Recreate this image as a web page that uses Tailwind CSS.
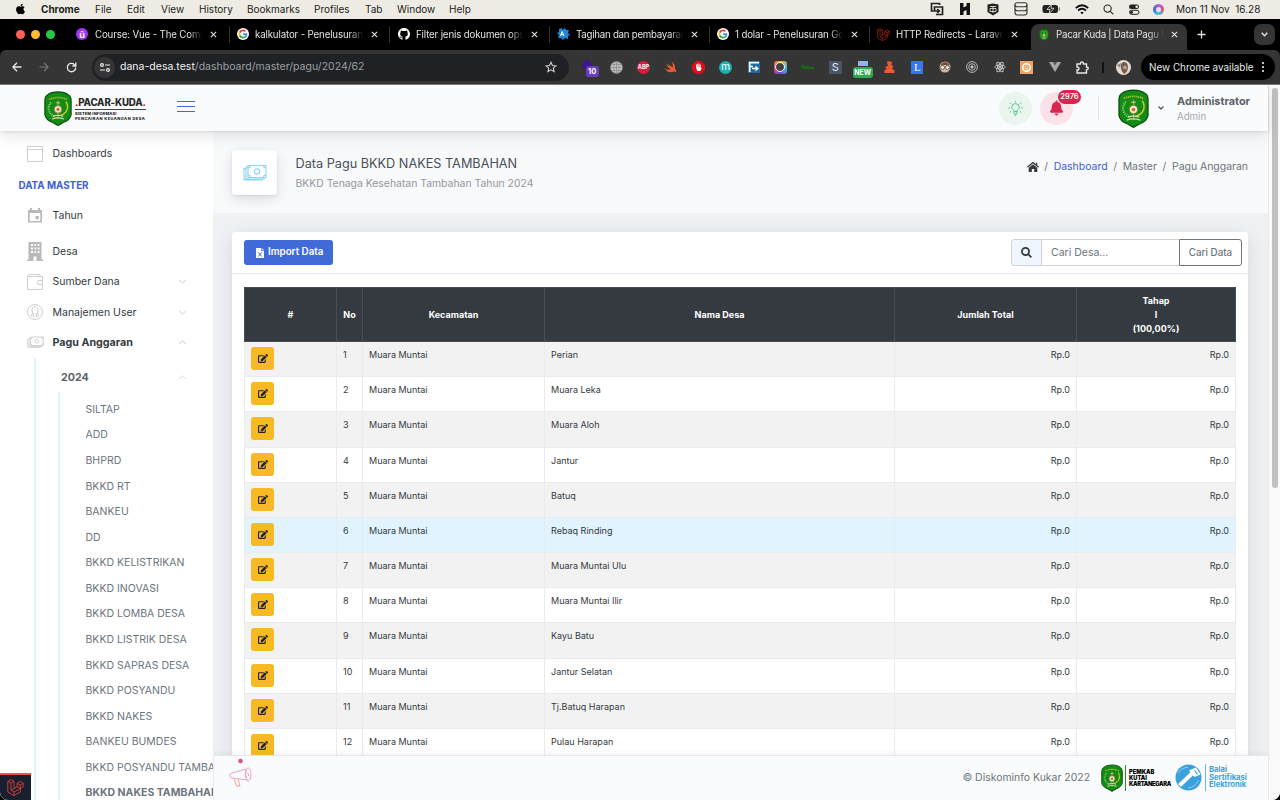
<!DOCTYPE html>
<html lang="id">
<head>
<meta charset="utf-8">
<title>Pacar Kuda | Data Pagu BKKD</title>
<script src="https://cdn.jsdelivr.net/npm/@tailwindcss/browser@4"></script>
</head>
<body class="w-[1280px] h-[800px] overflow-hidden bg-black font-['Inter',sans-serif] text-[#495057]">
<svg class="hidden">
  <symbol id="emblem" viewBox="0 0 32 40">
    <path d="M16 1C21 1 25 2 28 4.500Q31 6 31 11V27Q30 33 22 36L16 39.500L10 36Q2 33 1 27V11Q1 6 4 4.500Q8 1 16 1Z" fill="#128c14" stroke="#0a4d0a" stroke-width="1.300"/>
    <path d="M6 9.500Q16 5.500 26 9.500" fill="none" stroke="#a8b832" stroke-width="1.800" stroke-dasharray="1.500 .6"/>
    <path d="M8 13Q3 19 7 25Q9 28 13 29" fill="none" stroke="#8fce74" stroke-width="2.200" stroke-dasharray="1.200 1"/>
    <path d="M25 12Q29 18 25 24Q22 27.500 18 28" fill="none" stroke="#c8c82c" stroke-width="1.600"/>
    <path d="M16 11V32" stroke="#b89a5a" stroke-width="1.400" fill="none"/>
    <path d="M13.500 13.500H18.500" stroke="#d8d6a0" stroke-width="1"/>
    <circle cx="16" cy="21" r="4.300" fill="#f0ead8" stroke="#7a6a20" stroke-width=".8"/><circle cx="16" cy="21" r="1.900" fill="#c8702e"/>
    <path d="M10 29Q16 26.500 22 29M9 32Q16 29.500 23 32" stroke="#d8dcae" stroke-width="1.300" fill="none"/>
  </symbol>
  <symbol id="google" viewBox="0 0 48 48">
    <circle cx="24" cy="24" r="24" fill="#fff"/>
    <g transform="translate(6 6) scale(.75)"><path fill="#EA4335" d="M24 9.500c3.540 0 6.710 1.220 9.210 3.600l6.850-6.850C35.900 2.380 30.470 0 24 0 14.620 0 6.510 5.380 2.560 13.220l7.980 6.190C12.430 13.720 17.740 9.500 24 9.500z"/><path fill="#4285F4" d="M46.980 24.550c0-1.570-.15-3.090-.38-4.550H24v9.020h12.940c-.58 2.960-2.260 5.480-4.780 7.180l7.730 6c4.510-4.180 7.090-10.360 7.090-17.650z"/><path fill="#FBBC05" d="M10.530 28.590c-.48-1.450-.76-2.990-.76-4.590s.27-3.140.76-4.590l-7.980-6.190C.92 16.460 0 20.120 0 24c0 3.880.92 7.540 2.560 10.780l7.970-6.190z"/><path fill="#34A853" d="M24 48c6.480 0 11.930-2.130 15.890-5.810l-7.730-6c-2.150 1.450-4.920 2.300-8.160 2.300-6.260 0-11.570-4.220-13.470-9.910l-7.980 6.190C6.510 42.620 14.620 48 24 48z"/></g>
  </symbol>
  <symbol id="github" viewBox="0 0 16 16"><path fill="#fff" d="M8 0C3.580 0 0 3.580 0 8c0 3.540 2.290 6.530 5.470 7.590.4.070.55-.17.55-.38 0-.19-.01-.82-.01-1.490-2.010.37-2.530-.49-2.690-.94-.09-.23-.48-.94-.82-1.130-.28-.15-.68-.52-.01-.53.63-.01 1.080.58 1.230.82.72 1.210 1.870.87 2.330.66.07-.52.28-.87.51-1.070-1.780-.2-3.640-.89-3.640-3.950 0-.87.310-1.590.82-2.150-.08-.2-.36-1.020.08-2.120 0 0 .67-.21 2.200.82.64-.18 1.320-.27 2-.27s1.360.09 2 .27c1.530-1.040 2.200-.82 2.200-.82.44 1.100.16 1.920.08 2.120.51.56.82 1.270.82 2.150 0 3.070-1.870 3.750-3.650 3.950.29.25.54.73.54 1.480 0 1.070-.01 1.930-.01 2.200 0 .21.15.46.55.38A8.010 8.010 0 0016 8c0-4.420-3.580-8-8-8z"/></symbol>
  <symbol id="laravel" viewBox="0 0 50 52"><path fill="none" stroke="currentColor" stroke-width="2.600" stroke-linejoin="round" d="M1.500 7L11 1.500L20.500 7V29L30 23.500V13L39.500 7.500L48.500 13V24L39.500 29.500V40L20.500 50.500L1.500 40ZM1.500 7L11 12.500L20.500 7M11 12.500V34.500L20.500 40L39.500 29.500L30 23.500M30 13L39.500 18.500L48.500 13M39.500 18.500V29.500M11 34.500L20.500 29M20.500 40V50"/></symbol>
  <symbol id="x" viewBox="0 0 8 8"><path d="M1 1L7 7M7 1L1 7" stroke="#e8e8e8" stroke-width="1.200"/></symbol>
  <symbol id="money" viewBox="0 0 24 16"><path fill="none" stroke="currentColor" stroke-width="1.100" d="M5 1H23V13H5ZM5 2.500H3V14.500H21V13M3 4H1V15.500H19V14.500M7.500 1Q7.500 3.500 5 3.500M20.500 1Q20.500 3.500 23 3.500M7.500 13Q7.500 10.500 5 10.500M20.500 13Q20.500 10.500 23 10.500"/><circle cx="14" cy="7" r="2.600" fill="none" stroke="currentColor" stroke-width="1.100"/></symbol>
  <symbol id="edit" viewBox="0 0 576 512"><path fill="currentColor" d="M402.600 83.200l90.200 90.200c3.800 3.800 3.800 10 0 13.800L274.400 405.600l-92.800 10.300c-12.400 1.400-22.900-9.100-21.500-21.500l10.300-92.800L388.800 83.200c3.800-3.800 10-3.800 13.800 0zm162-22.900l-48.800-48.800c-15.200-15.200-39.900-15.200-55.200 0l-35.400 35.400c-3.800 3.800-3.800 10 0 13.800l90.200 90.200c3.800 3.800 10 3.800 13.800 0l35.400-35.400c15.200-15.300 15.200-40 0-55.200zM384 346.200V448H64V128h229.800c3.200 0 6.200-1.300 8.500-3.500l40-40c7.600-7.600 2.200-20.500-8.500-20.500H48C21.500 64 0 85.500 0 112v352c0 26.500 21.500 48 48 48h352c26.500 0 48-21.500 48-48V306.200c0-10.700-12.900-16-20.500-8.500l-40 40c-2.200 2.300-3.500 5.300-3.500 8.500z"/></symbol>
</svg>

<!-- macOS menu bar -->
<div class="flex h-[19px] items-center bg-[#edebe3] pb-px pl-[15px] pr-[14px] text-[10px] leading-none text-[#1c1c1c]">
  <svg class="h-[12px] w-[11px]" viewBox="0 0 384 512"><path d="M318.700 268.700c-.2-36.700 16.400-64.400 50-84.800-18.800-26.900-47.200-41.700-84.700-44.600-35.500-2.800-74.300 20.700-88.500 20.700-15 0-49.400-19.700-76.400-19.700C63.300 141.200 4 184.800 4 273.500q0 39.300 14.400 81.200c12.800 36.700 59 126.700 107.200 125.200 25.200-.6 43-17.900 75.800-17.900 31.800 0 48.300 17.900 76.400 17.900 48.600-.7 90.400-82.500 102.600-119.300-65.200-30.700-61.700-90-61.700-91.900zm-56.600-164.200c27.300-32.400 24.800-61.900 24-72.500-24.100 1.400-52 16.400-67.900 34.900-17.500 19.800-27.800 44.300-25.600 71.900 26.100 2 49.900-11.400 69.500-34.300z"/></svg>
  <div class="ml-[15px] w-[54px] font-bold">Chrome</div>
  <div class="w-[32px]">File</div><div class="w-[34px]">Edit</div><div class="w-[38px]">View</div><div class="w-[48px]">History</div><div class="w-[67px]">Bookmarks</div><div class="w-[51px]">Profiles</div><div class="w-[32px]">Tab</div><div class="w-[52px]">Window</div><div>Help</div>
  <div class="ml-auto flex items-center">
    <svg class="h-[14px] w-[14px]" viewBox="0 0 14 14" fill="none" stroke="#222" stroke-width="1.700"><path d="M3.500 9H1.500V1.500H9.500V3M6 12.500H12.500V5H4.500V9H9M7.300 7L9.300 9L7.300 11"/></svg>
    <svg class="ml-[16px] h-[12px] w-[10px]" viewBox="0 0 10 12"><path d="M0 0H3.500V4.500L6.500 3V0H10V12H6.500V7L3.500 8.500V12H0Z" fill="#111"/></svg>
    <svg class="ml-[17px] h-[13px] w-[12px]" viewBox="0 0 12 13"><path d="M.5 1.500L6 .5L11.500 1.500V9L6 12.500L.5 9Z" fill="#222"/><path d="M3 3.500H9M3 5.500H9V8.500H3ZM6 3.500V10" stroke="#edebe3" stroke-width=".8" fill="none"/></svg>
    <svg class="ml-[15px] h-[14px] w-[14px]" viewBox="0 0 14 14" fill="none" stroke="#333" stroke-width="1.100"><rect x="1" y=".8" width="12" height="4" rx="2"/><path d="M1 3V6.500Q1 8.800 3.500 8.800H10.500Q13 8.800 13 6.500V3M1 6.500V10.500Q1 13 3.500 13H10.500Q13 13 13 10.500V6.500"/></svg>
    <svg class="ml-[14px] h-[10px] w-[19px]" viewBox="0 0 19 10"><rect x=".5" y="1" width="15.500" height="8" rx="2.200" fill="#222"/><path d="M17.300 3.500V6.500" stroke="#777" stroke-width="1.200"/><path d="M9.500 0L5 5.500H8L7 10L12 4.300H9Z" fill="#222" stroke="#edebe3" stroke-width=".8"/></svg>
    <svg class="ml-[14px] h-[11px] w-[14px]" viewBox="0 0 14 11" fill="none" stroke="#111" stroke-width="1.700"><path d="M.8 4Q7-1.500 13.200 4M3 6.500Q7 3 11 6.500"/><path d="M5.300 8.500Q7 7.200 8.700 8.500L7 10.200Z" fill="#111" stroke="none"/></svg>
    <svg class="ml-[14px] h-[11px] w-[11px]" viewBox="0 0 11 11" fill="none" stroke="#222" stroke-width="1.100"><circle cx="4.600" cy="4.600" r="3.600"/><path d="M7.300 7.300L10.400 10.400"/></svg>
    <svg class="ml-[14px] h-[11px] w-[12px]" viewBox="0 0 12 11"><rect x="1" y=".5" width="10" height="4.400" rx="2.200" fill="#222"/><rect x="1.500" y="6.300" width="9.500" height="4" rx="2" fill="none" stroke="#222"/><circle cx="8.700" cy="2.700" r="1.300" fill="#edebe3"/><circle cx="3.500" cy="8.300" r="1.500" fill="#222"/></svg>
    <div class="ml-[13px] h-[11px] w-[11px] rounded-full bg-[conic-gradient(#b05ad8,#e04b8c,#3fc8d8,#3a6fe0,#b05ad8)] p-[3px]"><div class="h-full w-full rounded-full bg-white/80"></div></div>
    <div class="ml-[12px] w-[90px] whitespace-nowrap">Mon 11 Nov&nbsp; 16.28</div>
  </div>
</div>

<!-- Browser tabs -->
<div class="flex h-[31px] items-center bg-black pl-[16px] pr-[5px] text-[9.700px] leading-none tracking-[-0.140px] text-[#e3e3e3]">
  <div class="flex w-[54px] gap-[6px]"><i class="h-[9px] w-[9px] rounded-full bg-[#fe5f57]"></i><i class="h-[9px] w-[9px] rounded-full bg-[#febc2e]"></i><i class="h-[9px] w-[9px] rounded-full bg-[#28c840]"></i></div>
  <div class="flex w-[160px] items-center border-r border-[#333] pl-[6px]"><span class="flex h-[12px] w-[12px] items-center justify-center rounded-full bg-[#a435f0] text-[9px] font-bold text-white">û</span><span class="ml-[7px] w-[107px] overflow-hidden whitespace-nowrap py-1 [mask-image:linear-gradient(90deg,#000_88%,transparent)]">Course: Vue - The Comp</span><svg class="ml-[8px] h-[7px] w-[7px]"><use href="#x"/></svg></div>
  <div class="flex w-[160px] items-center border-r border-[#333] pl-[7px]"><svg class="h-[12px] w-[12px]"><use href="#google"/></svg><span class="ml-[6px] w-[108px] overflow-hidden whitespace-nowrap py-1 [mask-image:linear-gradient(90deg,#000_88%,transparent)]">kalkulator - Penelusuran</span><svg class="ml-[8px] h-[7px] w-[7px]"><use href="#x"/></svg></div>
  <div class="flex w-[160px] items-center border-r border-[#333] pl-[8px]"><svg class="h-[12px] w-[12px]"><use href="#github"/></svg><span class="ml-[6px] w-[107px] overflow-hidden whitespace-nowrap py-1 [mask-image:linear-gradient(90deg,#000_88%,transparent)]">Filter jenis dokumen ops</span><svg class="ml-[8px] h-[7px] w-[7px]"><use href="#x"/></svg></div>
  <div class="flex w-[160px] items-center border-r border-[#333] pl-[7px]"><svg class="h-[12px] w-[13px]" viewBox="0 0 13 12"><path d="M2 1L5 0V2L8 0L9 2L12 2L11 5L13 7L11 8L11 11L8 10L6 12L4 10L1 10L2 7L0 5L2 4Z" fill="#1c86d8"/><path d="M3.500 8L5.200 3.500L7 8M4 6.600H6.300" stroke="#fff" fill="none"/></svg><span class="ml-[6px] w-[107px] overflow-hidden whitespace-nowrap py-1 tracking-[-0.250px] [mask-image:linear-gradient(90deg,#000_88%,transparent)]">Tagihan dan pembayaran</span><svg class="ml-[8px] h-[7px] w-[7px]"><use href="#x"/></svg></div>
  <div class="flex w-[160px] items-center border-r border-[#333] pl-[7px]"><svg class="h-[12px] w-[12px]"><use href="#google"/></svg><span class="ml-[6px] w-[108px] overflow-hidden whitespace-nowrap py-1 [mask-image:linear-gradient(90deg,#000_88%,transparent)]">1 dolar - Penelusuran Go</span><svg class="ml-[8px] h-[7px] w-[7px]"><use href="#x"/></svg></div>
  <div class="flex w-[161px] items-center pl-[7px]"><svg class="h-[13px] w-[13px] text-[#b3261c]"><use href="#laravel"/></svg><span class="ml-[6px] w-[107px] overflow-hidden whitespace-nowrap py-1 [mask-image:linear-gradient(90deg,#000_88%,transparent)]">HTTP Redirects - Larave</span><svg class="ml-[8px] h-[7px] w-[7px]"><use href="#x"/></svg></div>
  <div class="mt-[5px] flex h-[26px] w-[156px] items-center rounded-t-[8px] bg-[#353535] pb-[5px] pl-[7px]"><svg class="h-[12px] w-[12px]"><use href="#emblem"/></svg><span class="ml-[6px] w-[108px] overflow-hidden whitespace-nowrap py-1 tracking-[-0.250px] [mask-image:linear-gradient(90deg,#000_85%,transparent)]">Pacar Kuda | Data Pagu B</span><svg class="ml-[7px] h-[7px] w-[7px]"><use href="#x"/></svg></div>
  <svg class="ml-[10px] h-[9px] w-[9px]" viewBox="0 0 9 9"><path d="M4.500 .5V8.500M.5 4.500H8.500" stroke="#e3e3e3" stroke-width="1.300"/></svg>
  <div class="ml-auto flex h-[21px] w-[21px] items-center justify-center rounded-[7px] bg-[#353535]"><svg class="h-[5px] w-[7px]" viewBox="0 0 7 5"><path d="M.7 .8L3.500 3.800L6.300 .8" fill="none" stroke="#e3e3e3" stroke-width="1.300"/></svg></div>
</div>

<!-- Browser toolbar -->
<div class="flex h-[35px] items-center rounded-t-[6px] border-b border-[#777] bg-[#353535] pl-[12px] pr-[5px] text-[10.500px] leading-none text-[#e8e8e8]">
  <svg class="h-[10px] w-[10px]" viewBox="0 0 10 10" fill="none" stroke="#e8e8e8" stroke-width="1.300"><path d="M9.500 5H1M5 .8L.9 5L5 9.200"/></svg>
  <svg class="ml-[17px] h-[10px] w-[10px]" viewBox="0 0 10 10" fill="none" stroke="#777" stroke-width="1.200"><path d="M.5 5H9M5 .8L9.100 5L5 9.200"/></svg>
  <svg class="ml-[17px] h-[11px] w-[11px]" viewBox="0 0 11 11" fill="none" stroke="#e8e8e8" stroke-width="1.300"><path d="M9.700 5.500A4.200 4.200 0 1 1 8.300 2.400L9.600 3.800M9.800 .6V4H6.400"/></svg>
  <div class="ml-[15px] flex h-[27px] w-[477px] items-center rounded-full bg-[#202124] pl-[2px]">
    <div class="flex h-[21px] w-[21px] items-center justify-center rounded-full bg-[#353535]"><svg class="h-[9px] w-[10px]" viewBox="0 0 10 9" fill="none" stroke="#e8e8e8" stroke-width="1.200"><circle cx="2" cy="2" r="1.400"/><circle cx="8" cy="7" r="1.400"/><path d="M5 2H10M0 7H5"/></svg></div>
    <div class="ml-[5px] whitespace-nowrap pt-px tracking-[0.010px] text-[#9aa0a6]"><span class="text-[#f0f0f0]">dana-desa.test</span>/dashboard/master/pagu/2024/62</div>
    <svg class="ml-auto mr-[12px] h-[12px] w-[12px]" viewBox="0 0 24 24" fill="none" stroke="#ccc" stroke-width="2.200"><path d="M12 2.500L14.900 9.100L22 9.700L16.600 14.400L18.200 21.400L12 17.700L5.800 21.400L7.400 14.400L2 9.700L9.100 9.100Z"/></svg>
  </div>
  <div class="ml-[6px] flex items-center">
    <div class="flex w-[27.400px] justify-center"><div class="relative ml-[4px] h-[14px] w-[16px]"><div class="mt-px h-[8px] w-[8px] rotate-45 bg-[#3b1794]"></div><span class="absolute left-[3px] top-[6px] flex h-[11px] w-[13px] items-center justify-center rounded-[3px] bg-[#6a3cc0] text-[7.500px] font-bold text-white">10</span></div></div>
    <div class="flex w-[27.400px] justify-center"><svg class="h-[13px] w-[13px]" viewBox="0 0 13 13" fill="none" stroke="#888" stroke-width=".7"><circle cx="6.500" cy="6.500" r="6" fill="#c4c4c4"/><ellipse cx="6.500" cy="6.500" rx="2.700" ry="6"/><path d="M.5 6.500H12.500M6.500 .5V12.500M1.500 3.500H11.500M1.500 9.500H11.500"/></svg></div>
    <div class="flex w-[27.400px] justify-center"><span class="flex h-[13px] w-[13px] items-center justify-center rounded-full bg-[#e3173e] pt-px text-[5.500px] font-bold text-white">ABP</span></div>
    <div class="flex w-[27.400px] justify-center"><svg class="h-[12px] w-[13px]" viewBox="0 0 13 12"><path d="M7.500 .5Q11.500 3.500 11 7.500Q12.500 9.500 12 11.500Q10.500 10 9 10.700Q4 12.500 .5 7.500Q4 9.500 6.500 8.500Q3.500 6 1.500 2.500Q4.500 5 6 5.800Q4.200 3.800 3.200 2Q6 4.800 9 6.500Q9.200 3.500 7.500 .5Z" fill="#f05a28"/></svg></div>
    <div class="flex w-[27.400px] justify-center"><svg class="h-[13px] w-[13px]" viewBox="0 0 13 13"><path d="M4 0H9L13 4V9L9 13H4L0 9V4Z" fill="#e30b17"/><path d="M4.500 6V4M5.700 6V3M7 6V3M8.300 6V4" stroke="#fff" stroke-linecap="round"/><path d="M4 6H8.800V7.500L10 6.800L8.300 10H5.200Z" fill="#fff"/></svg></div>
    <div class="flex w-[27.400px] justify-center"><span class="flex h-[13px] w-[13px] items-center justify-center rounded-full bg-[#19b2b0] pb-[2px] text-[10px] text-white">m</span></div>
    <div class="flex w-[27.400px] justify-center"><svg class="ml-[2px] h-[12px] w-[12px]" viewBox="0 0 12 12"><rect width="12" height="12" fill="#1c6aa0"/><path d="M1 1.700H11M1.700 1V11M1 5.500H5M4 7.500H9" stroke="#fff" stroke-width="1.700" fill="none"/><path d="M7.500 4.500L11 7.500L7.500 10.500Z" fill="#fff"/></svg></div>
    <div class="flex w-[27.400px] justify-center"><div class="flex h-[13px] w-[13px] items-center justify-center rounded-[3px] bg-[conic-gradient(#f7b32b,#49b7e8,#6c4cd8,#e8397a,#f7b32b)]"><i class="h-[10px] w-[10px] rounded-full border-[1.500px] border-white bg-[#444]"></i></div></div>
    <div class="flex w-[27.400px] justify-center"><svg class="h-[6px] w-[13px]" viewBox="0 0 13 6"><path d="M0 1L3 1L4 3L7 1.500L9 3H13V5H1Z" fill="#166a16"/></svg></div>
    <div class="flex w-[27.400px] justify-center"><span class="flex h-[13px] w-[13px] items-center justify-center bg-[#4a5568] text-[11px] text-[#e8eef8]">S</span></div>
    <div class="flex w-[27.400px] justify-center"><div class="relative h-[14px] w-[20px]"><i class="ml-[5px] mt-px block h-[5px] w-[10px] bg-[#8fb6e8]"></i><span class="absolute bottom-[-4px] left-0 flex h-[11px] w-[20px] items-center justify-center rounded-[3px] bg-[#34a853] text-[7px] font-bold text-white">NEW</span></div></div>
    <div class="flex w-[27.400px] justify-center"><svg class="h-[12px] w-[11px]" viewBox="0 0 11 12"><path d="M3.500 0L8 1L7.500 4L9.500 5.500L8 7.500L10.500 9.500V12H.5V9L3 8L1 6.500L4 4.500L3 2Z" fill="#ee5a2c"/></svg></div>
    <div class="flex w-[27.400px] justify-center"><span class="flex h-[13px] w-[12px] items-center justify-center bg-[#3a75f0] font-['Liberation_Serif',serif] text-[11px] text-white">L</span></div>
    <div class="flex w-[27.400px] justify-center"><svg class="h-[12px] w-[12px]" viewBox="0 0 12 12"><circle cx="6" cy="6" r="5.500" fill="#d8b49a"/><path d="M1 4Q6-2 11 4Z" fill="#7a4a3a"/><circle cx="3.500" cy="6.500" r="2" fill="#eee" stroke="#666"/><circle cx="8.500" cy="6.500" r="2" fill="#eee" stroke="#666"/></svg></div>
    <div class="flex w-[27.400px] justify-center"><svg class="h-[12px] w-[12px]" viewBox="0 0 12 12" fill="none" stroke="#c8c8c8" stroke-width=".9"><circle cx="6" cy="6" r="5.400"/><circle cx="6" cy="6" r="3.300"/><circle cx="6" cy="6" r="1.200" fill="#c8c8c8"/></svg></div>
    <div class="flex w-[27.400px] justify-center"><svg class="h-[12px] w-[12px]" viewBox="0 0 12 12" fill="none" stroke="#c8c8c8" stroke-width=".9"><ellipse cx="6" cy="6" rx="5.300" ry="2"/><ellipse cx="6" cy="6" rx="5.300" ry="2" transform="rotate(60 6 6)"/><ellipse cx="6" cy="6" rx="5.300" ry="2" transform="rotate(120 6 6)"/><circle cx="6" cy="6" r=".8" fill="#c8c8c8"/></svg></div>
    <div class="flex w-[27.400px] justify-center"><svg class="h-[13px] w-[13px]" viewBox="0 0 13 13"><rect width="13" height="13" fill="#f0a468"/><circle cx="6.500" cy="6.500" r="3.800" fill="none" stroke="#fff" stroke-width="1.500"/><path d="M5 5.500H5.800M7.300 5.500H8M5 7.300Q6.500 8.500 8 7.300" stroke="#fff" stroke-width=".8" fill="none"/></svg></div>
    <div class="flex w-[27.400px] justify-center"><svg class="ml-[2px] h-[10px] w-[12px]" viewBox="0 0 12 10"><path d="M0 0H12L6 10Z" fill="#a8a8a8"/><path d="M4 0H8L6 3.500Z" fill="#555"/></svg></div>
    <div class="flex w-[27.400px] justify-center"><svg class="ml-[2px] h-[13px] w-[13px]" viewBox="0 0 13 13" fill="none" stroke="#e8e8e8" stroke-width="1.400"><path d="M1 3H4.500Q4.500 1 6 1Q7.500 1 7.500 3H10.500V6Q12.300 6 12.300 7.300Q12.300 8.600 10.500 8.600V12H1V9Q3 9 3 7.400Q3 6 1 6Z"/></svg></div>
  </div>
  <i class="ml-[7px] h-[11px] w-[2px] bg-[#111]"></i>
  <svg class="ml-[12px] h-[15px] w-[15px]" viewBox="0 0 15 15"><circle cx="7.500" cy="7.500" r="7.500" fill="#e4dcd4"/><path d="M7 2Q12 2 12 7Q12 12 8 14Q5 11 5 8Q4 4 7 2Z" fill="#6e5a4e"/><path d="M1 5L5 3L4 8Z" fill="#8a8a88"/><circle cx="9" cy="7.500" r="2" fill="#c49a80"/></svg>
  <div class="ml-auto flex h-[26px] w-[134px] items-center rounded-full bg-black pl-[8px] text-[9.900px]"><span class="whitespace-nowrap pt-px">New Chrome available</span><span class="ml-auto mr-[11px] flex flex-col gap-[2px]"><i class="h-[2px] w-[2px] rounded-full bg-white"></i><i class="h-[2px] w-[2px] rounded-full bg-white"></i><i class="h-[2px] w-[2px] rounded-full bg-white"></i></span></div>
</div>

<!-- Page -->
<div class="relative flex h-[715px] overflow-hidden rounded-b-[8px] bg-[#fafafa]">
 <div class="flex h-full w-[1268px] flex-col">
  <header class="relative z-10 flex h-[46px] shrink-0 items-center bg-[#fafbfc] pl-[44px] shadow-[0_4px_14px_rgba(30,35,50,0.120),0_1px_3px_rgba(30,35,50,0.100)]">
    <svg class="h-[35px] w-[28px]"><use href="#emblem"/></svg>
    <div class="ml-[3px] mt-[3px] w-[72px] whitespace-nowrap leading-none text-[#2a2a2a]">
      <div class="text-[9.700px] font-extrabold tracking-[-0.180px]"><span class="text-[#c22]">.</span>PACAR-KUDA<span class="text-[#c22]">.</span></div>
      <div class="mt-[1px] h-[1.500px] w-[71px] bg-[#444]"></div>
      <div class="mt-[2px] text-[4px] font-extrabold tracking-[0.160px]">SISTEM INFORMASI</div>
      <div class="mt-[1px] text-[4px] font-extrabold tracking-[0.440px]">PENCAIRAN KEUANGAN DESA</div>
    </div>
    <div class="ml-[30px] mb-[3px] flex w-[18px] flex-col gap-[4px]"><i class="h-px bg-[#3f6ad8]"></i><i class="h-px bg-[#3f6ad8]"></i><i class="h-px bg-[#3f6ad8]"></i></div>
    <div class="ml-auto flex items-center">
      <div class="flex h-[33px] w-[33px] items-center justify-center rounded-full bg-[#e9f5ee]"><svg class="h-[15px] w-[15px]" viewBox="0 0 15 15" fill="none" stroke="#3ac47d" stroke-width=".9"><path d="M6 10.500Q6 9.500 5 8.500Q3.800 7.500 3.800 6.300A3.700 3.700 0 0 1 11.200 6.300Q11.200 7.500 10 8.500Q9 9.500 9 10.500ZM6 10.500V13H9V10.500M6.800 14.300H8.200M7.500 0V1.300M.3 7H1.800M13.200 7H14.700M1.800 2L3 3M13.200 2L12 3M1.800 11.500L3 10.500M13.200 11.500L12 10.500"/></svg></div>
      <div class="relative ml-[8px] flex h-[33px] w-[33px] items-center justify-center rounded-full bg-[#fbe2e8]"><svg class="h-[16px] w-[13px]" viewBox="0 0 448 512"><path fill="#d92550" d="M224 512c35.300 0 64-28.600 64-64H160c0 35.400 28.700 64 64 64zm215.400-149.700c-19.300-20.800-55.500-52-55.500-154.300 0-77.700-54.500-139.900-127.900-155.200V32c0-17.700-14.300-32-32-32s-32 14.300-32 32v20.800C118.600 68.100 64.100 130.300 64.100 208c0 102.300-36.200 133.500-55.500 154.300-6 6.500-8.700 14.200-8.600 21.700.1 16.400 13 32 32.100 32h383.800c19.100 0 32-15.600 32.100-32 0-7.500-2.600-15.300-8.600-21.700z"/></svg><span class="absolute left-[18px] top-[-2px] flex h-[14px] w-[23px] items-center justify-center rounded-full bg-[#d92550] text-[7.500px] font-semibold text-white">2976</span></div>
      <div class="ml-[25px] h-[24px] w-px bg-[#e3e5e8]"></div>
      <svg class="ml-[19px] h-[39px] w-[31px]"><use href="#emblem"/></svg>
      <svg class="ml-[9px] h-[4px] w-[6px]" viewBox="0 0 6 4"><path d="M.5 .5L3 3L5.500 .5" fill="none" stroke="#555" stroke-width="1.300"/></svg>
      <div class="ml-[13px] mt-[2px] w-[91px]"><div class="text-[10.900px] font-bold leading-[15px] text-[#5c6166]">Administrator</div><div class="text-[9.700px] leading-[16px] text-[#a4a8ac]">Admin</div></div>
    </div>
  </header>
  <div class="flex min-h-0 flex-1">
   <aside class="relative w-[213px] shrink-0 overflow-hidden bg-white text-[10.500px] leading-none text-[#343a40] [&_span]:pt-[2px]">
    <div class="mt-[14px] flex h-[17px] items-center pl-[27px]"><svg class="h-[16px] w-[16px] shrink-0" viewBox="0 0 16 16" fill="none" stroke="#cfcfcf"><rect x=".5" y=".5" width="15" height="15"/><path d="M0 3.500H16"/></svg><span class="ml-[9.500px]">Dashboards</span></div>
    <div class="mt-[18px] flex h-[10px] items-center pl-[18.500px] text-[9.800px] font-bold text-[#3f5fd0]"><span>DATA MASTER</span></div>
    <div class="mt-[16px] flex h-[18px] items-center pl-[27px]"><svg class="h-[15px] w-[16px]" viewBox="0 0 16 15"><path d="M3 0H5V2H11V0H13V2H15V14.500H1V2H3ZM2.700 5V13H13.300V5Z" fill="#b9b9b9" fill-rule="evenodd"/><rect x="8.500" y="8" width="3.300" height="3.300" fill="#b9b9b9"/></svg><span class="ml-[9.500px]">Tahun</span></div>
    <div class="mt-[17px] flex h-[20px] items-center pl-[27px]"><svg class="h-[19px] w-[16px]" viewBox="0 0 16 19"><path d="M1.500 0H14.500V17.500H16V19H9.500V14.500H6.500V19H0V17.500H1.500Z" fill="#b9b9b9"/><path d="M4 3H6M7.500 3H9M10.500 3H12.500M4 6.500H6M7.500 6.500H9M10.500 6.500H12.500M4 10H6M7.500 10H9M10.500 10H12.500" stroke="#fff" stroke-width="1.800"/></svg><span class="ml-[9.500px]">Desa</span></div>
    <div class="mt-[11px] flex h-[19px] items-center pl-[27px] pr-[26px]"><svg class="h-[16px] w-[16px]" viewBox="0 0 16 16" fill="none" stroke="#cfcfcf"><path d="M.5 2.500H15.500V15.500H.5ZM.5 2.500L2 .5H13V2.500M15.500 6.500H11Q9.500 8.500 11 10.500H15.500"/></svg><span class="ml-[9.500px]">Sumber Dana</span><svg class="ml-auto h-[5px] w-[9px]" viewBox="0 0 9 5"><path d="M1 .8L4.500 4L8 .8" fill="none" stroke="#ccc"/></svg></div>
    <div class="mt-[12px] flex h-[18px] items-center pl-[27px] pr-[26px]"><svg class="h-[16px] w-[16px]" viewBox="0 0 16 16" fill="none" stroke="#cfcfcf"><circle cx="8" cy="8" r="7.500"/><path d="M5.500 13Q4.500 13 4.500 11Q6.500 9 5 7Q5 2.500 8 2.500Q11 2.500 11 7Q9.500 9 11.500 11Q11.500 13 10.500 13M6.500 9V13M9.500 9V13"/></svg><span class="ml-[9.500px]">Manajemen User</span><svg class="ml-auto h-[5px] w-[9px]" viewBox="0 0 9 5"><path d="M1 .8L4.500 4L8 .8" fill="none" stroke="#ccc"/></svg></div>
    <div class="mt-[12px] flex h-[18px] items-center pl-[27px] pr-[26px] text-[10.700px] font-bold"><svg class="h-[12px] w-[17px] text-[#c8c8c8]"><use href="#money"/></svg><span class="ml-[8.500px]">Pagu Anggaran</span><svg class="ml-auto h-[5px] w-[9px]" viewBox="0 0 9 5"><path d="M1 4L4.500 .8L8 4" fill="none" stroke="#ccc"/></svg></div>
    <div class="ml-[34px] mt-[7px] h-[460px] border-l-2 border-[#e0f3ff] text-[#6c757d]">
      <div class="flex h-[34px] items-center pl-[25px] pr-[26px] pt-[4px] text-[10.700px] font-bold text-[#5c636a]"><span>2024</span><svg class="ml-auto h-[5px] w-[9px]" viewBox="0 0 9 5"><path d="M1 4L4.500 .8L8 4" fill="none" stroke="#ddd"/></svg></div>
      <ul id="programs" class="ml-[22px] h-[430px] border-l-2 border-[#e0f3ff] pl-[25.500px] pt-[5.400px]"></ul>
    </div>
    <div class="absolute bottom-0 left-0 flex h-[27px] w-[31px] items-center justify-center border-t-2 border-[#f4504a] bg-[#18202f] text-[#e8413a]"><svg class="h-[17px] w-[17px]"><use href="#laravel"/></svg></div>
   </aside>
   <main class="flex min-w-0 flex-1 flex-col bg-[#f0f1f4]">
    <div class="flex h-[82px] shrink-0 items-start bg-[#f8f9fb] pl-[19px] pr-[20px] pt-[19px]">
      <div class="flex h-[45px] w-[45px] items-center justify-center rounded-[3px] bg-white text-[#8ad4f5] shadow-[0_4px_12px_rgba(30,35,50,0.130),0_1px_3px_rgba(30,35,50,0.080)]"><svg class="h-[17px] w-[24px]"><use href="#money"/></svg></div>
      <div class="ml-[18.500px] pt-[4px]"><h1 class="text-[12.700px] leading-[20px] text-[#495057]">Data Pagu BKKD NAKES TAMBAHAN</h1><p class="text-[10.400px] leading-[19px] text-[#94989d]">BKKD Tenaga Kesehatan Tambahan Tahun 2024</p></div>
      <nav class="ml-auto flex items-center pt-[9px] text-[10.450px] leading-[16px] text-[#6c757d]"><svg class="h-[10px] w-[12px]" viewBox="0 0 12 10"><path d="M6 .5L.5 5.300M6 .5L11.500 5.300" stroke="#343a40" stroke-width="1.300"/><path d="M6 2.200L10.300 6V10H7.200V7H4.800V10H1.700V6ZM8.800 .8H10.300V3.500L8.800 2.200Z" fill="#343a40"/></svg><span class="mx-[5.700px]">/</span><span class="text-[#3f5fd0]">Dashboard</span><span class="mx-[5.700px]">/</span><span>Master</span><span class="mx-[5.700px]">/</span><span>Pagu Anggaran</span></nav>
    </div>
    <section class="ml-[19px] mt-[19px] w-[1016px] flex-1 overflow-hidden rounded-t-[3px] bg-white shadow-[0_6px_26px_rgba(30,35,50,0.090),0_2px_8px_rgba(30,35,50,0.040)]">
      <div class="flex h-[42px] items-center border-b border-[#e9ebed] pl-[12px] pr-[6px]">
        <button class="flex h-[25px] w-[89px] items-center rounded-[3px] bg-[#3f6ad8] pl-[12px] text-[9.800px] font-semibold text-white"><svg class="mr-[4px] h-[10px] w-[8px]" viewBox="0 0 8 10"><path d="M0 0H5V3H8V10H0ZM5.700 0L8 2.300H5.700Z" fill="#fff"/><path d="M2.300 4.300L5.700 8.500M5.700 4.300L2.300 8.500" stroke="#3f6ad8"/></svg>Import Data</button>
        <div class="ml-auto flex h-[27px] text-[10.500px] text-[#6c757d]"><span class="flex w-[31px] items-center justify-center rounded-l-[3px] border border-[#ced4da] bg-[#eff6ff]"><svg class="h-[11px] w-[11px]" viewBox="0 0 11 11" fill="none" stroke="#343a40" stroke-width="1.700"><circle cx="4.500" cy="4.500" r="3.600"/><path d="M7.200 7.200L10.400 10.400"/></svg></span><span class="flex w-[137px] items-center border-y border-[#ced4da] pl-[9px]">Cari Desa...</span><span class="flex w-[63px] items-center justify-center rounded-r-[3px] border border-[#6c757d] pt-px text-[9.800px] font-medium">Cari Data</span></div>
      </div>
      <table class="ml-[12px] mt-[13px] w-[991px] table-fixed border-collapse text-[9px] text-[#343a40]">
        <colgroup><col class="w-[92px]"><col class="w-[26px]"><col class="w-[182px]"><col class="w-[350px]"><col class="w-[182px]"><col class="w-[159px]"></colgroup>
        <thead><tr class="h-[54px] bg-[#343a40] font-bold leading-[14px] text-white"><th class="border border-[#454d55]">#</th><th class="border border-[#454d55]">No</th><th class="border border-[#454d55]">Kecamatan</th><th class="border border-[#454d55]">Nama Desa</th><th class="border border-[#454d55]">Jumlah Total</th><th class="border border-[#454d55]">Tahap<br>I<br>(100,00%)</th></tr></thead>
        <tbody id="rows"></tbody>
      </table>
    </section>
   </main>
  </div>
  <footer class="absolute bottom-0 left-[214px] flex h-[45px] w-[1054px] items-center border-t border-[#e4e6e9] bg-[#fafbfc] pb-px pr-[19px] shadow-[0_-2px_6px_rgba(30,35,50,0.050)]">
    <svg class="mb-[8px] ml-[14px] h-[31px] w-[25px]" viewBox="0 0 25 31" fill="none" stroke="#e9a3c0" stroke-width="1"><circle cx="12.500" cy="3" r="2.300" fill="#d9527f" stroke="none"/><path d="M18 11L4 15Q1.500 15.500 2 18Q2.500 20.500 5 20L19 22Q16 17 18 11Z"/><ellipse cx="20.300" cy="16.500" rx="2.700" ry="6.500"/><path d="M6 20.500L8.500 28H12L10 21M19 15Q21 15 20.500 18" stroke="#f0a09a"/></svg>
    <div class="ml-auto text-[10.450px] text-[#6c757d]">© Diskominfo Kukar 2022</div>
    <svg class="ml-[11px] h-[28px] w-[22px]"><use href="#emblem"/></svg>
    <div class="ml-[2px] w-[46px] whitespace-nowrap border-l border-[#2c8a2c] py-[4px] pl-[3px] text-[5.700px] font-black leading-[6px] text-black">PEMKAB<br>KUTAI<br><span class="tracking-[-0.300px]">KARTANEGARA</span></div>
    <svg class="ml-[4px] h-[27px] w-[27px]" viewBox="0 0 27 27"><circle cx="13.500" cy="13.500" r="13" fill="#3ba0dc"/><path d="M4.500 21.500L17 9.500" stroke="#fff" stroke-width="4" fill="none"/><path d="M14 6.500L21 3.500L25.500 10.500L19.500 13Z" fill="#fff"/><path d="M19.500 6L22.500 10.500" stroke="#3ba0dc" stroke-width="1.200"/><path d="M3 9Q7 3 13 3.500M13 24Q21 23 23.500 16" stroke="#8fd0f5" fill="none"/></svg>
    <div class="ml-[3px] w-[44px] whitespace-nowrap border-l border-[#6ab8e6] py-[2px] pl-[3px] text-[7.600px] font-bold leading-[7.500px] text-[#3ba0dc]">Balai<br>Sertifikasi<br>Elektronik</div>
  </footer>
 </div>
 <div class="relative w-[12px] border-l border-[#e8e8e8] bg-[#fafafa] pl-[3px] pt-[3px]"><div class="h-[400px] w-[6px] rounded-full bg-[#c1c1c1]"></div></div>
</div>

<script>
const programs = ['SILTAP','ADD','BHPRD','BKKD RT','BANKEU','DD','BKKD KELISTRIKAN','BKKD INOVASI','BKKD LOMBA DESA','BKKD LISTRIK DESA','BKKD SAPRAS DESA','BKKD POSYANDU','BKKD NAKES','BANKEU BUMDES','BKKD POSYANDU TAMBAHAN','BKKD NAKES TAMBAHAN'];
document.getElementById('programs').innerHTML = programs.map((p, i) =>
  `<li class="flex h-[25.570px] items-center whitespace-nowrap ${i === 15 ? 'font-bold' : ''}">${p}</li>`).join('');
const villages = ['Perian','Muara Leka','Muara Aloh','Jantur','Batuq','Rebaq Rinding','Muara Muntai Ulu','Muara Muntai Ilir','Kayu Batu','Jantur Selatan','Tj.Batuq Harapan','Pulau Harapan'];
document.getElementById('rows').innerHTML = villages.map((v, i) => {
  const bg = i === 5 ? 'bg-[#e0f3ff]' : i % 2 ? 'bg-white' : 'bg-[#f2f2f2]';
  const td = 'border border-[#e9ecef] px-[6px] pt-[5px] align-top leading-[15px]';
  return `<tr class="h-[35.180px] ${bg}"><td class="${td}"><span class="flex h-[23px] w-[23px] items-center justify-center rounded-[3px] bg-[#f7b924] text-[#212529]"><svg class="h-[9px] w-[10px]"><use href="#edit"/></svg></span></td><td class="${td}">${i + 1}</td><td class="${td}">Muara Muntai</td><td class="${td}">${v}</td><td class="${td} text-right">Rp.0</td><td class="${td} text-right">Rp.0</td></tr>`;
}).join('');
</script>
</body>
</html>
